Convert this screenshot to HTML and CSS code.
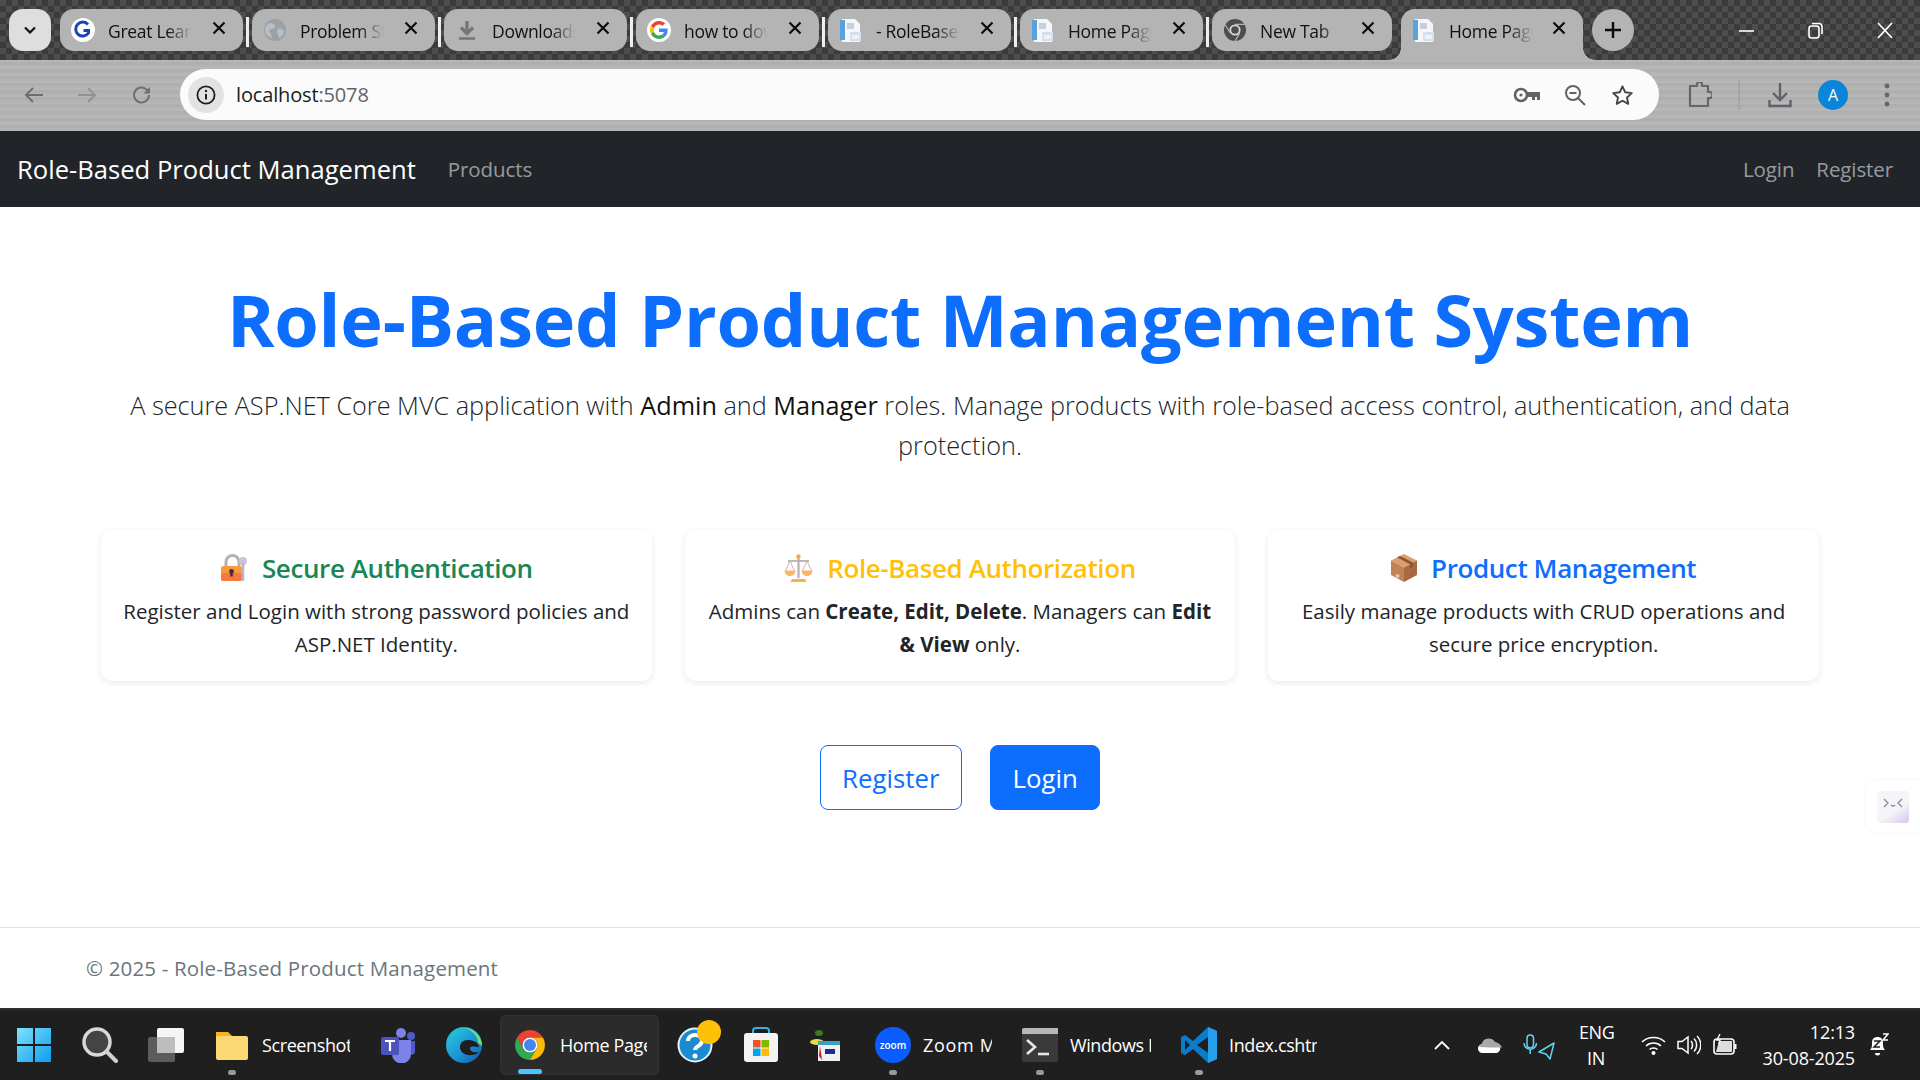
FILE: index.html
```html
<!DOCTYPE html>
<html lang="en">
<head>
<meta charset="utf-8">
<title>Home Page</title>
<link rel="stylesheet" href="styles.css">
</head>
<body>
<svg class="sprite" width="0" height="0" aria-hidden="true">
  <symbol id="g-color" viewBox="0 0 48 48">
    <path fill="#EA4335" d="M24 9.5c3.54 0 6.71 1.22 9.21 3.6l6.85-6.85C35.9 2.38 30.47 0 24 0 14.62 0 6.51 5.38 2.56 13.22l7.98 6.19C12.43 13.72 17.74 9.5 24 9.5z"/>
    <path fill="#4285F4" d="M46.98 24.55c0-1.57-.15-3.09-.38-4.55H24v9.02h12.94c-.58 2.96-2.26 5.48-4.78 7.18l7.73 6c4.51-4.18 7.09-10.36 7.09-17.65z"/>
    <path fill="#FBBC05" d="M10.53 28.59c-.48-1.45-.76-2.99-.76-4.59s.27-3.14.76-4.59l-7.98-6.19C.92 16.46 0 20.12 0 24c0 3.88.92 7.54 2.56 10.78l7.97-6.19z"/>
    <path fill="#34A853" d="M24 48c6.48 0 11.93-2.13 15.89-5.81l-7.73-6c-2.15 1.45-4.92 2.3-8.16 2.3-6.26 0-11.57-4.22-13.47-9.91l-7.98 6.19C6.51 42.62 14.62 48 24 48z"/>
  </symbol>
  <symbol id="doc" viewBox="0 0 24 24">
    <path fill="#f4f6fa" d="M3 1h13l5 5v18H3z"/>
    <path fill="#5aa2dc" d="M1 2h5v20H1z"/>
    <path fill="#c6cfdc" d="M8 5h7v6H8z"/>
    <path fill="#d7dfeb" d="M11 14h11v9H11z"/>
    <path fill="#eef2f8" d="M13 17h7v4h-7z"/>
  </symbol>
  <symbol id="close" viewBox="0 0 14 14"><path d="M1.5 1.5l11 11M12.5 1.5l-11 11" stroke="#0c0c0c" stroke-width="2.2" fill="none"/></symbol>
</svg>

<div class="screen">
  <header class="tabstrip">
    <button class="tab-search" type="button" aria-label="Search tabs">
      <svg width="14" height="9" viewBox="0 0 14 9"><path d="M2 1.5l5 5 5-5" fill="none" stroke="#111" stroke-width="2.2"/></svg>
    </button>
    <div class="tab">
      <svg class="favicon" viewBox="0 0 24 24"><circle cx="12" cy="12" r="12" fill="#fff"/><path d="M17 6.5A7 7 0 1 0 17.5 15V12.5h-5" fill="none" stroke="#1546b5" stroke-width="3"/></svg>
      <span class="tab-label">Great Learning</span>
      <svg class="tab-close"><use href="#close"/></svg>
    </div>
    <div class="tab">
      <svg class="favicon" viewBox="0 0 24 24"><circle cx="12" cy="12" r="11" fill="#9aa1a8"/><path d="M6 5c3 0 5 1 6 3s-2 3-4 3-2 3 0 5l1 4c-4-1-7-5-7-9 0-2 2-5 4-6zM15 11c3-1 5 0 6 2 0 3-2 6-5 7-1-3-3-7-1-9z" fill="#b9bec3"/></svg>
      <span class="tab-label">Problem Statement</span>
      <svg class="tab-close"><use href="#close"/></svg>
    </div>
    <div class="tab">
      <svg class="favicon" viewBox="0 0 24 24"><path d="M12 3v11M6 9.5l6 6 6-6" fill="none" stroke="#72777c" stroke-width="3.4"/><path d="M4 20.5h16" stroke="#72777c" stroke-width="2.6"/></svg>
      <span class="tab-label">Downloads</span>
      <svg class="tab-close"><use href="#close"/></svg>
    </div>
    <div class="tab">
      <svg class="favicon favicon-google" viewBox="0 0 24 24"><circle cx="12" cy="12" r="12" fill="#fff"/><use href="#g-color" x="3" y="3" width="18" height="18"/></svg>
      <span class="tab-label">how to download</span>
      <svg class="tab-close"><use href="#close"/></svg>
    </div>
    <div class="tab">
      <svg class="favicon"><use href="#doc"/></svg>
      <span class="tab-label">- RoleBased</span>
      <svg class="tab-close"><use href="#close"/></svg>
    </div>
    <div class="tab">
      <svg class="favicon"><use href="#doc"/></svg>
      <span class="tab-label">Home Page</span>
      <svg class="tab-close"><use href="#close"/></svg>
    </div>
    <div class="tab tab-short">
      <svg class="favicon" viewBox="0 0 24 24"><circle cx="12" cy="12" r="11" fill="#4a4d50"/><circle cx="12" cy="12" r="5.6" fill="#d6d6d6"/><circle cx="12" cy="12" r="3.8" fill="#4a4d50"/><path d="M12 6.4h10M7.2 15l-4.8-8M16.8 15L12 23" stroke="#b5b5b5" stroke-width="1.2"/></svg>
      <span class="tab-label">New Tab</span>
      <svg class="tab-close"><use href="#close"/></svg>
    </div>
    <div class="tab tab-active">
      <svg class="favicon"><use href="#doc"/></svg>
      <span class="tab-label">Home Page</span>
      <svg class="tab-close"><use href="#close"/></svg>
    </div>
    <button class="tab-new" type="button" aria-label="New tab">
      <svg width="18" height="18" viewBox="0 0 18 18"><path d="M9 1v16M1 9h16" stroke="#0c0c0c" stroke-width="2.4"/></svg>
    </button>
    <div class="window-controls">
      <svg width="15" height="15" viewBox="0 0 15 15"><path d="M0 8h15" stroke="#fff" stroke-width="1.6"/></svg>
      <svg width="15" height="18" viewBox="0 0 15 18"><rect x="1" y="5" width="10" height="12" rx="2.5" fill="none" stroke="#fff" stroke-width="1.6"/><path d="M4 2.5h7a3 3 0 0 1 3 3V13" fill="none" stroke="#fff" stroke-width="1.6"/></svg>
      <svg width="16" height="17" viewBox="0 0 16 17"><path d="M1 1l14 15M15 1L1 16" stroke="#fff" stroke-width="1.7"/></svg>
    </div>
  </header>

  <div class="toolbar">
    <svg class="nav-icon" viewBox="0 0 20 20"><path d="M19 10H2M9 3l-7 7 7 7" fill="none" stroke="#6b6f73" stroke-width="2"/></svg>
    <svg class="nav-icon nav-forward" viewBox="0 0 20 20"><path d="M1 10h17M11 3l7 7-7 7" fill="none" stroke="#8f9296" stroke-width="2"/></svg>
    <svg class="nav-icon nav-reload" viewBox="0 0 20 20"><path d="M17 10a7.5 7.5 0 1 1-2.2-5.3L17 7" fill="none" stroke="#6b6f73" stroke-width="2"/><path d="M18 2v6.5h-6.5z" fill="#6b6f73"/></svg>
    <div class="omnibox">
      <span class="site-info">
        <svg width="20" height="20" viewBox="0 0 20 20"><circle cx="10" cy="10" r="8.6" fill="none" stroke="#1f1f1f" stroke-width="1.8"/><path d="M10 9v5.5" stroke="#1f1f1f" stroke-width="2"/><circle cx="10" cy="6" r="1.2" fill="#1f1f1f"/></svg>
      </span>
      <span class="url">localhost<span class="url-port">:5078</span></span>
      <span class="omni-icons">
        <svg class="omni-key" width="28" height="16" viewBox="0 0 28 16"><circle cx="8" cy="8" r="6" fill="none" stroke="#5f6368" stroke-width="2.6"/><circle cx="8" cy="8" r="1.6" fill="#5f6368"/><path d="M14 5h13v8h-3v-3h-2v3h-3v-3h-5z" fill="#5f6368"/></svg>
        <svg width="22" height="22" viewBox="0 0 22 22"><circle cx="9" cy="9" r="7" fill="none" stroke="#5f6368" stroke-width="2"/><path d="M5.5 9h7M14 14l7 7" stroke="#5f6368" stroke-width="2"/></svg>
        <svg width="23" height="22" viewBox="0 0 24 23"><path d="M12 2.5l2.9 6.2 6.8.8-5 4.6 1.3 6.7-6-3.3-6 3.3 1.3-6.7-5-4.6 6.8-.8z" fill="none" stroke="#444" stroke-width="2" stroke-linejoin="round"/></svg>
      </span>
    </div>
    <svg class="tool-ext" width="24" height="26" viewBox="0 0 24 26"><path d="M2 4h7V2.500a2.500 2.500 0 0 1 5 0V4h6v6h1.500a3 3 0 0 1 0 6H20v8H2z" fill="none" stroke="#63676b" stroke-width="2.200" stroke-linejoin="round"/></svg>
    <span class="tool-sep"></span>
    <svg class="tool-down" width="24" height="26" viewBox="0 0 24 26"><path d="M12 1v16M5 11l7 7 7-7" fill="none" stroke="#5f6368" stroke-width="2.4"/><path d="M1.5 18v6h21v-6" fill="none" stroke="#5f6368" stroke-width="2.4"/></svg>
    <span class="avatar">A</span>
    <svg class="tool-menu" width="6" height="24" viewBox="0 0 6 24"><circle cx="3" cy="3" r="2.4" fill="#63676b"/><circle cx="3" cy="12" r="2.4" fill="#63676b"/><circle cx="3" cy="21" r="2.4" fill="#63676b"/></svg>
  </div>

  <div class="viewport">
    <nav class="navbar">
      <a class="brand">Role-Based Product Management</a>
      <a class="nav-link nav-products">Products</a>
      <span class="nav-spacer"></span>
      <a class="nav-link">Login</a>
      <a class="nav-link nav-register">Register</a>
    </nav>

    <main class="hero">
      <h1 class="hero-title">Role-Based Product Management System</h1>
      <p class="lead">A secure ASP.NET Core MVC application with <span class="lead-strong">Admin</span> and <span class="lead-strong">Manager</span> roles. Manage products with role-based access control, authentication, and data protection.</p>

      <section class="cards">
        <article class="card">
          <h2 class="card-title title-green">
            <svg class="emoji" width="28" height="28" viewBox="0 0 28 28"><path d="M6 13V8a6.5 6.5 0 0 1 13 0v5" fill="none" stroke="#b7aeb8" stroke-width="3"/><rect x="1" y="12" width="21" height="15" rx="2.5" fill="#f99b3a"/><rect x="1" y="19" width="21" height="8" rx="2.5" fill="#f5793b"/><circle cx="11.5" cy="17.5" r="2.4" fill="#3b3045"/><path d="M10.3 18h2.4v4.5h-2.4z" fill="#3b3045"/><circle cx="23" cy="7" r="4" fill="#cdc4d8"/><path d="M21.7 9h2.6v17l-1.3 1.5-1.3-1.5z" fill="#bdb3ca"/></svg>
            Secure Authentication
          </h2>
          <p class="card-text">Register and Login with strong password policies and ASP.NET Identity.</p>
        </article>
        <article class="card">
          <h2 class="card-title title-yellow">
            <svg class="emoji" width="29" height="28" viewBox="0 0 29 28"><path d="M14.5 2v22" stroke="#b7aeb8" stroke-width="2.2"/><path d="M4 7h21" stroke="#b7aeb8" stroke-width="1.8"/><path d="M6 7L1.5 17M6 7l4.500 10M23 7l-4.500 10M23 7l4.500 10" stroke="#cdb6ac" stroke-width="1"/><circle cx="14.500" cy="2.500" r="2.200" fill="#f9a949"/><path d="M.5 16.500h11a5.500 5.500 0 0 1-11 0zM17.500 16.500h11a5.500 5.500 0 0 1-11 0z" fill="#fbb56a"/><path d="M8 25h13l1.500 3h-16z" fill="#f9b04e"/></svg>
            Role-Based Authorization
          </h2>
          <p class="card-text">Admins can <strong>Create, Edit, Delete</strong>. Managers can <strong>Edit &amp; View</strong> only.</p>
        </article>
        <article class="card">
          <h2 class="card-title title-blue">
            <svg class="emoji" width="26" height="28" viewBox="0 0 26 28"><path d="M13 0l13 6.500-13 7-13-7z" fill="#d9a06f"/><path d="M0 6.500l13 7V28L0 21z" fill="#c28254"/><path d="M26 6.500l-13 7V28l13-7z" fill="#a9683f"/><path d="M6 3.200l13 7v4l3-1.600v-4L9 2z" fill="#8e5532"/><circle cx="6.500" cy="22" r="2" fill="#d8c6c8"/></svg>
            Product Management
          </h2>
          <p class="card-text">Easily manage products with CRUD operations and secure price encryption.</p>
        </article>
      </section>

      <div class="actions">
        <a class="btn btn-outline">Register</a>
        <a class="btn btn-solid">Login</a>
      </div>
    </main>

    <footer class="footer">© 2025 - Role-Based Product Management</footer>

    <aside class="side-widget">
      <span class="side-widget-face">
        <svg width="20" height="12" viewBox="0 0 20 12"><path d="M1 2l4 4-4 4M19 2l-4 4 4 4M8 8c1 1.500 3 1.500 4 0" fill="none" stroke="#8b8f96" stroke-width="1.400"/></svg>
      </span>
    </aside>
  </div>

  <div class="taskbar">
    <div class="task">
      <svg class="task-icon" viewBox="0 0 36 36"><defs><linearGradient id="win" x1="0" y1="0" x2="1" y2="1"><stop offset="0" stop-color="#7de3fb"/><stop offset="1" stop-color="#0f9cf0"/></linearGradient></defs><path fill="url(#win)" d="M1 1h16v16H1zM19 1h16v16H19zM1 19h16v16H1zM19 19h16v16H19z"/></svg>
    </div>
    <div class="task">
      <svg class="task-icon" viewBox="0 0 36 36"><circle cx="15" cy="15" r="13" fill="#444" stroke="#d8d8d8" stroke-width="3.500"/><path d="M25 25l9 9" stroke="#cfcfcf" stroke-width="4" stroke-linecap="round"/></svg>
    </div>
    <div class="task">
      <svg class="task-icon" viewBox="0 0 36 36"><rect x="0" y="10" width="27" height="25" rx="2" fill="#5c5c5c"/><rect x="9" y="1" width="27" height="25" rx="2" fill="#f5f5f5"/><rect x="9" y="10" width="18" height="16" fill="#bdbdbd"/></svg>
    </div>
    <div class="task task-running">
      <svg class="task-icon" viewBox="0 0 36 36"><path d="M2 5h12l4 4v6H2z" fill="#f5b521"/><rect x="2" y="9" width="32" height="24" rx="2" fill="#fcd873"/></svg>
      <span class="task-label task-label-wide">Screenshot 2025</span>
    </div>
    <div class="task">
      <svg class="task-icon" viewBox="0 0 36 36"><circle cx="21" cy="6" r="5" fill="#7b83eb"/><circle cx="31" cy="9" r="4" fill="#5059c9"/><path d="M26 14h9v12a6 6 0 0 1-9 0z" fill="#5059c9"/><path d="M12 13h19v14a9 9 0 0 1-19 0z" fill="#7b83eb"/><rect x="1" y="10" width="18" height="18" rx="2" fill="#4b53bc"/><path d="M5 14h10M10 14v10" stroke="#fff" stroke-width="2.200"/></svg>
    </div>
    <div class="task">
      <svg class="task-icon" viewBox="0 0 36 36"><defs><linearGradient id="edge" x1="0" y1="0" x2="1" y2="1"><stop offset="0" stop-color="#2ad0d8"/><stop offset=".6" stop-color="#1b8fd6"/><stop offset="1" stop-color="#0c59a4"/></linearGradient></defs><circle cx="18" cy="18" r="18" fill="url(#edge)"/><path d="M36 19C36 8 27 1 18 1c5 1 14 6 14 15z" fill="#6fe07a"/><path d="M33 20c-1-5-6-7-11-7-5 0-8 3-8 7 0 5 5 9 12 8 3 0 5-1 7-3-4 1-9 0-9-4 0-1.500 3-2 9-1z" fill="#1e1e1e"/></svg>
    </div>
    <div class="task task-active">
      <svg class="task-icon" viewBox="0 0 48 48"><path fill="#ea4335" d="M24 4a20 20 0 0 1 17.300 10H24a10 10 0 0 0-8.660 15L6.700 14A20 20 0 0 1 24 4z"/><path fill="#34a853" d="M6.700 14A20 20 0 0 0 24 44l8.660-15a10 10 0 0 1-17.320 0z"/><path fill="#fbbc05" d="M41.300 14A20 20 0 0 1 24 44l8.660-15A10 10 0 0 0 24 14z"/><circle cx="24" cy="24" r="10" fill="#fff"/><circle cx="24" cy="24" r="8" fill="#4285f4"/></svg>
      <span class="task-label task-label-wide">Home Page - Google</span>
    </div>
    <div class="task task-help">
      <svg class="task-icon" viewBox="0 0 36 36"><circle cx="18" cy="18" r="16.500" fill="#1a8bd0" stroke="#e6f2f8" stroke-width="2"/><path d="M11 14c0-8 14-8 14 0 0 5-7 5-7 9" fill="none" stroke="#fff" stroke-width="4"/><circle cx="18" cy="29" r="2.500" fill="#fff"/></svg>
      <span class="badge-dot"></span>
    </div>
    <div class="task">
      <svg class="task-icon" viewBox="0 0 36 36"><path d="M10 8V4a3 3 0 0 1 3-3h10a3 3 0 0 1 3 3v4" fill="none" stroke="#35b0e6" stroke-width="2"/><rect x="1" y="6" width="34" height="29" rx="3" fill="#f3f3f3"/><path d="M10 13h7.500v7.500H10z" fill="#f25022"/><path d="M18.500 13H26v7.500h-7.500z" fill="#7fba00"/><path d="M10 21.500h7.500V29H10z" fill="#00a4ef"/><path d="M18.500 21.500H26V29h-7.500z" fill="#ffb900"/></svg>
    </div>
    <div class="task">
      <svg class="task-icon" viewBox="0 0 36 36"><ellipse cx="10" cy="6" rx="4" ry="3" fill="#3a7a22"/><ellipse cx="8" cy="15" rx="7" ry="3" fill="#e7d84a"/><rect x="9" y="14" width="22" height="20" fill="#eef0f4"/><rect x="9" y="14" width="22" height="4" fill="#37a0c4"/><path d="M11 19l2 14-3-4z" fill="#c0161c"/><path d="M16 22h10v5H16z" fill="#1b2c8f"/></svg>
    </div>
    <div class="task task-running task-zoom">
      <span class="zoom-badge">zoom</span>
      <span class="task-label">Zoom Meeting</span>
    </div>
    <div class="task task-running task-term">
      <svg class="task-icon" viewBox="0 0 36 36"><rect y="1" width="36" height="34" rx="2" fill="#3a3a3a"/><path d="M0 3a2 2 0 0 1 2-2h34v6H0z" fill="#b8b8b8"/><path d="M5 13l8 7-8 7" fill="none" stroke="#e8e8e8" stroke-width="2.600"/><path d="M16 27h11" stroke="#e8e8e8" stroke-width="2.600"/></svg>
      <span class="task-label task-label-term">Windows PowerShell</span>
    </div>
    <div class="task task-running task-code">
      <svg class="task-icon" viewBox="0 0 36 36"><path d="M27 0l9 4v28l-9 4-15-14-8 6-4-2V10l4-2 8 6z" fill="#0a7ccc"/><path d="M27 0l9 4v28l-9 4z" fill="#26a0ea"/><path d="M27 10l-11 8 11 8z" fill="#1e1e1e"/><path d="M4 13v10l5-5z" fill="#1e1e1e"/></svg>
      <span class="task-label task-label-wide">Index.cshtml - RoleBased</span>
    </div>

    <div class="tray">
      <svg class="tray-caret" width="16" height="10" viewBox="0 0 16 10"><path d="M1 9l7-7 7 7" fill="none" stroke="#fff" stroke-width="1.800"/></svg>
      <svg class="tray-cloud" width="24" height="16" viewBox="0 0 24 16"><path d="M5 16a4.500 4.500 0 0 1-1-9 7 7 0 0 1 13-1.500A5.500 5.500 0 0 1 19 16z" fill="#fff"/><path d="M1 10a4.500 4.500 0 0 1 3-3 7 7 0 0 1 13-1.500c3 0 6 2 7 5-7 0-16 0-23-.5z" fill="#a8a8a8"/></svg>
      <svg class="tray-mic" width="32" height="26" viewBox="0 0 32 26"><rect x="4" y="1" width="6.500" height="13" rx="3.200" fill="none" stroke="#5fd2f2" stroke-width="1.500"/><path d="M1 9a6.200 6.200 0 0 0 12.500 0M7.200 16v4" fill="none" stroke="#5fd2f2" stroke-width="1.500"/><path d="M31 9L16 18l7 2 4 5z" fill="none" stroke="#5fd2f2" stroke-width="1.500" stroke-linejoin="round"/></svg>
      <span class="tray-lang">ENG<br>IN</span>
      <svg class="tray-wifi" width="25" height="20" viewBox="0 0 25 20"><path d="M1 7c6-6 17-6 23 0M5 11c4-4 11-4 15 0M8.500 14.500c2-2 6-2 8 0" fill="none" stroke="#fff" stroke-width="1.500"/><circle cx="12.500" cy="18" r="2" fill="#fff"/></svg>
      <svg class="tray-volume" width="24" height="20" viewBox="0 0 24 20"><path d="M1 6.500h4L11 2v16l-6-4.500H1z" fill="none" stroke="#fff" stroke-width="1.500"/><path d="M14 6c2 2 2 6 0 8M17 3.500c3.500 3.500 3.500 9.500 0 13M20 1c5 5 5 13 0 18" fill="none" stroke="#fff" stroke-width="1.500"/></svg>
      <svg class="tray-battery" width="24" height="22" viewBox="0 0 24 22"><rect x="1" y="5" width="20" height="15" rx="3" fill="none" stroke="#fff" stroke-width="1.600"/><path d="M21.500 10h2v5h-2z" fill="#fff"/><path d="M3 18l3-11h13v11z" fill="#fff" opacity=".85"/><path d="M7 0L4 6h3l-1 4" fill="none" stroke="#fff" stroke-width="1.400"/></svg>
      <span class="tray-clock">12:13<br>30-08-2025</span>
      <svg class="tray-bell" width="21" height="24" viewBox="0 0 21 24"><path d="M2 17c2-2 2-4 2-7 0-4 2-6 5.500-6S15 6 15 10c0 3 0 5 2 7z" fill="#fff"/><path d="M7 20h5a2.500 2.500 0 0 1-5 0z" fill="#fff"/><path d="M6 8h6l-6 6h6" fill="none" stroke="#1e1e1e" stroke-width="1.500"/><path d="M15 1h5l-5 6h5" fill="none" stroke="#fff" stroke-width="1.500"/></svg>
    </div>
  </div>
</div>
</body>
</html>
```

FILE: styles.css
```css
* { box-sizing: border-box; }
html, body { margin: 0; padding: 0; }
body {
  width: 1920px;
  height: 1080px;
  overflow: hidden;
  font-family: "Open Sans", "Noto Sans", sans-serif;
  color: #212529;
  background: #fff;
}
.sprite { position: absolute; }
.screen { display: flex; flex-direction: column; height: 1080px; }

/* Browser tab strip */
.tabstrip {
  height: 60px;
  display: flex;
  align-items: flex-start;
  padding: 9px 0 0 9px;
  background: repeating-conic-gradient(#3b3b3b 0 25%, #4d4d4d 0 50%) 0 0 / 12px 12px;
}
.tab-search {
  width: 42px;
  height: 42px;
  margin-right: 9px;
  border: 0;
  border-radius: 14px;
  background: #dedede;
  display: flex;
  align-items: center;
  justify-content: center;
}
.tab {
  position: relative;
  width: 183px;
  height: 42px;
  margin-right: 9px;
  display: flex;
  align-items: center;
  padding-left: 11px;
  border-radius: 14px;
  background: #b4b4b4;
  color: #111;
  font-size: 17.500px;
  letter-spacing: -0.3px;
}
.tab::after {
  content: "";
  position: absolute;
  right: -6px;
  top: 8px;
  width: 3px;
  height: 30px;
  background: #eee;
}
.tab-short { width: 180px; }
.tab-short::after, .tab-active::after { display: none; }
.tab-active {
  width: 182px;
  height: 51px;
  padding-bottom: 9px;
  border-radius: 14px 14px 0 0;
  background: #b4b4b4;
}
.tab-active::before {
  content: "";
  position: absolute;
  left: -12px;
  right: -12px;
  bottom: 0;
  height: 12px;
  background:
    radial-gradient(circle at 0 0, transparent 11.500px, #b4b4b4 12px) left bottom / 12px 12px no-repeat,
    radial-gradient(circle at 100% 0, transparent 11.500px, #b4b4b4 12px) right bottom / 12px 12px no-repeat;
}
.favicon { width: 24px; height: 24px; flex: none; }
.tab-label {
  width: 84px;
  margin-left: 13px;
  padding-top: 2px;
  white-space: nowrap;
  overflow: hidden;
  -webkit-mask-image: linear-gradient(90deg, #000 70%, transparent 100%);
  mask-image: linear-gradient(90deg, #000 70%, transparent 100%);
}
.tab-close { width: 14px; height: 14px; margin-left: auto; margin-right: 17px; margin-top: -4px; flex: none; }
.tab-new {
  width: 42px;
  height: 42px;
  border: 0;
  border-radius: 50%;
  background: #b4b4b4;
  display: flex;
  align-items: center;
  justify-content: center;
}
.window-controls {
  margin-left: auto;
  padding-right: 27px;
  height: 42px;
  display: flex;
  align-items: center;
  gap: 54px;
}

/* Browser toolbar */
.toolbar {
  height: 71px;
  display: flex;
  align-items: center;
  padding: 0 30px 2px 24px;
  background:
    repeating-linear-gradient(180deg, rgba(255,255,255,.05) 0 2px, rgba(0,0,0,.025) 2px 5px, rgba(255,255,255,.02) 5px 7px),
    #b3b3b3;
}
.nav-icon { width: 20px; height: 20px; flex: none; }
.nav-forward { margin-left: 33px; }
.nav-reload { margin-left: 35px; }
.omnibox {
  width: 1479px;
  height: 51px;
  margin-left: 28px;
  display: flex;
  align-items: center;
  padding-left: 8px;
  border-radius: 26px;
  background: #fbfbfb;
}
.site-info {
  width: 36px;
  height: 36px;
  border-radius: 50%;
  background: #e2e2e2;
  display: flex;
  align-items: center;
  justify-content: center;
}
.url { margin-left: 12px; font-size: 20px; letter-spacing: -0.15px; color: #1b1b1b; }
.url-port { color: #5f6368; }
.omni-icons {
  margin-left: auto;
  padding-right: 25px;
  display: flex;
  align-items: center;
  gap: 25px;
}
.omni-key { margin-right: -2px; }
.tool-ext { margin-left: 29px; flex: none; }
.tool-sep { width: 2px; height: 30px; margin-left: 26px; background: #a6a6a6; flex: none; }
.tool-down { margin-left: 28px; flex: none; }
.avatar {
  width: 30px;
  height: 30px;
  margin-left: 26px;
  flex: none;
  border-radius: 50%;
  background: #0a85d9;
  color: #fff;
  font-size: 16px;
  display: flex;
  align-items: center;
  justify-content: center;
}
.tool-menu { margin-left: 36px; flex: none; }

/* Page */
.viewport {
  position: relative;
  flex: 1;
  display: flex;
  flex-direction: column;
  min-height: 0;
  background: #fff;
}
.navbar {
  height: 76px;
  flex: none;
  display: flex;
  align-items: center;
  padding: 0 27px 0 17px;
  background: #212529;
}
.brand { color: #fff; font-size: 25.600px; letter-spacing: 0; white-space: nowrap; }
.nav-link { color: rgba(255,255,255,.55); font-size: 20.500px; letter-spacing: -0.1px; }
.nav-products { margin-left: 32px; }
.nav-spacer { flex: 1; }
.nav-register { margin-left: 22px; }

.hero { flex: 1; padding: 70px 101px 0; text-align: center; }
.hero-title {
  margin: 0 0 24px;
  font-size: 72px;
  line-height: 84px;
  font-weight: 700;
  letter-spacing: -0.2px;
  color: #0d6efd;
  white-space: nowrap;
}
.lead {
  margin: 0 0 65px;
  font-size: 25.250px;
  line-height: 40px;
  font-weight: 300;
  letter-spacing: 0;
}
.lead-strong { font-weight: 500; color: #111; }
.cards {
  display: grid;
  grid-template-columns: repeat(3, 1fr);
  gap: 33px;
}
.card {
  height: 151px;
  padding: 20px 17px;
  border-radius: 10px;
  background: #fff;
  box-shadow: 0 2px 6px rgba(0,0,0,.09);
}
.card-title {
  margin: 0 0 9px;
  height: 36px;
  display: flex;
  align-items: center;
  justify-content: center;
  gap: 14px;
  font-size: 26px;
  line-height: 36px;
  font-weight: 600;
  letter-spacing: -0.4px;
}
.title-green { color: #198754; }
.title-yellow { color: #ffc107; }
.title-blue { color: #0d6efd; }
.emoji { flex: none; }
.card-text { margin: 0; font-size: 20.500px; line-height: 33px; letter-spacing: 0; }
.card-text strong { font-weight: 700; }

.actions { margin-top: 64px; display: flex; justify-content: center; gap: 28px; }
.btn {
  height: 65px;
  padding: 0 21.500px;
  display: flex;
  align-items: center;
  border-radius: 8px;
  font-size: 25.800px;
  border: 1px solid #0d6efd;
}
.btn-outline { color: #0d6efd; background: #fff; }
.btn-solid { color: #fff; background: #0d6efd; }

.footer {
  height: 81px;
  flex: none;
  display: flex;
  align-items: center;
  padding: 0 0 0 86px;
  border-top: 1px solid #dee2e6;
  color: #6c757d;
  font-size: 20.500px;
  letter-spacing: 0.16px;
}
.side-widget {
  position: absolute;
  right: 0;
  top: 649px;
  width: 54px;
  height: 53px;
  padding: 11px 0 0 11px;
  border-radius: 10px 0 0 10px;
  background: #fff;
  box-shadow: 0 0 3px rgba(0,0,0,.06);
}
.side-widget-face {
  display: flex;
  justify-content: center;
  padding-top: 6px;
  width: 32px;
  height: 32px;
  border-radius: 3px;
  background: linear-gradient(145deg, #f3f5f8 60%, #d9c2f2 100%);
}

/* Windows taskbar */
.taskbar {
  height: 72px;
  flex: none;
  display: flex;
  align-items: center;
  padding-left: 1px;
  border-top: 2px solid #2e2e2e;
  background: #1f1f1f;
  color: #fff;
}
.task {
  position: relative;
  height: 60px;
  padding: 0 15px;
  flex: none;
  display: flex;
  align-items: center;
  font-size: 18px;
  letter-spacing: -0.4px;
}
.task-icon { width: 36px; height: 36px; flex: none; }
.task-label {
  width: 69px;
  margin-left: 12px;
  white-space: nowrap;
  overflow: hidden;
}
.task-zoom .task-label { letter-spacing: .7px; }
.task-label-wide { width: 88px; }
.task-label-term { width: 81px; }
.task-running::after {
  content: "";
  position: absolute;
  left: 29px;
  bottom: 0;
  width: 8px;
  height: 5px;
  border-radius: 3px;
  background: #9b9b9b;
}
.task-active {
  width: 159px;
  margin: 0 3px;
  padding: 0 12px;
  border-radius: 6px;
  background: #2b2b2b;
  box-shadow: inset 0 0 0 1px #333;
}
.task-active::after {
  content: "";
  position: absolute;
  left: 18px;
  bottom: 1px;
  width: 24px;
  height: 5px;
  border-radius: 3px;
  background: #4cc2ff;
}
.badge-dot {
  position: absolute;
  left: 35px;
  top: 5px;
  width: 24px;
  height: 24px;
  border-radius: 50%;
  background: #ffc107;
}
.zoom-badge {
  width: 36px;
  height: 36px;
  flex: none;
  border-radius: 50%;
  background: #0b5cff;
  color: #fff;
  font-size: 10px;
  font-weight: 600;
  letter-spacing: 0;
  display: flex;
  align-items: center;
  justify-content: center;
}
.tray { margin-left: auto; padding-right: 31px; display: flex; align-items: center; }
.tray-cloud { margin-left: 28px; }
.tray-mic { margin-left: 21px; margin-top: 4px; }
.tray-lang { margin-left: 24px; width: 34px; text-align: center; font-size: 18px; line-height: 26px; letter-spacing: -0.4px; }
.tray-wifi { margin-left: 28px; }
.tray-volume { margin-left: 11px; }
.tray-battery { margin-left: 12px; }
.tray-clock { margin-left: 24px; width: 94px; text-align: right; font-size: 18px; line-height: 26px; letter-spacing: -0.15px; white-space: nowrap; }
.tray-bell { margin-left: 13px; }
```
